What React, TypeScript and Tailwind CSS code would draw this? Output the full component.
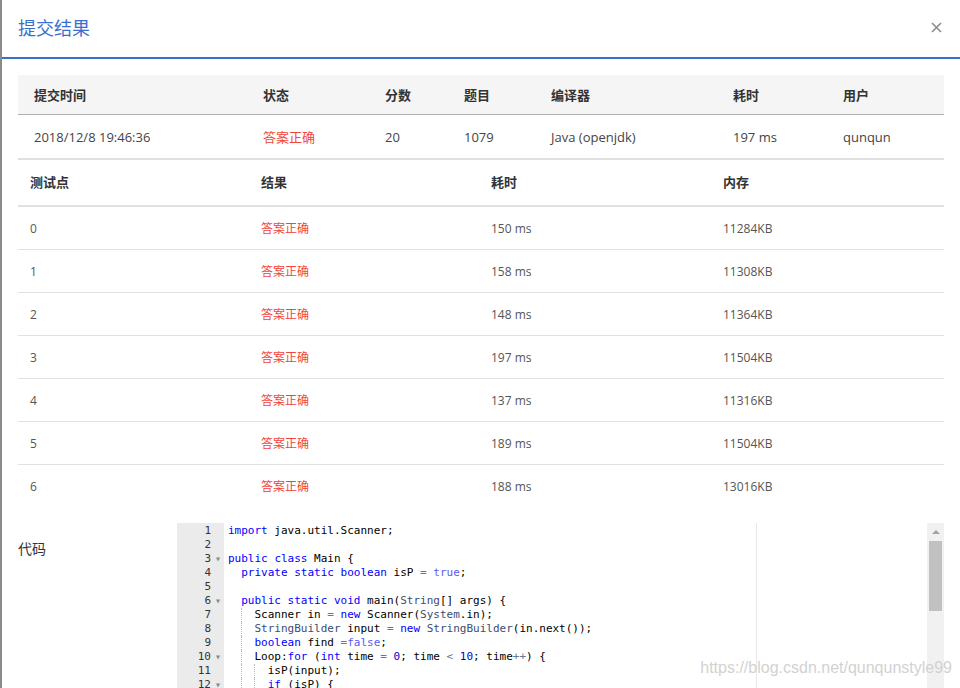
import React from "react";

type Tok = [string, string];

const tokColor: Record<string, string> = {
  k: "text-[#0000ff]",
  c: "text-[#585cf6]",
  n: "text-[#0000cd]",
  s: "text-[#3c4c72]",
  o: "text-[#687687]",
  t: "text-black",
};

const summaryCols = [
  { label: "提交时间", value: "2018/12/8 19:46:36" },
  { label: "状态", value: "答案正确", red: true },
  { label: "分数", value: "20" },
  { label: "题目", value: "1079" },
  { label: "编译器", value: "Java (openjdk)" },
  { label: "耗时", value: "197 ms" },
  { label: "用户", value: "qunqun" },
];

const cases = [
  ["0", "150 ms", "11284KB"],
  ["1", "158 ms", "11308KB"],
  ["2", "148 ms", "11364KB"],
  ["3", "197 ms", "11504KB"],
  ["4", "137 ms", "11316KB"],
  ["5", "189 ms", "11504KB"],
  ["6", "188 ms", "13016KB"],
];

// indent level, foldable, tokens
const code: { ind: number; fold?: boolean; toks: Tok[] }[] = [
  { ind: 0, toks: [["import", "k"], [" java.util.Scanner;", "t"]] },
  { ind: 0, toks: [] },
  { ind: 0, fold: true, toks: [["public", "k"], [" ", "t"], ["class", "k"], [" Main {", "t"]] },
  {
    ind: 1,
    toks: [
      ["private", "k"], [" ", "t"], ["static", "k"], [" ", "t"], ["boolean", "k"],
      [" isP ", "t"], ["=", "o"], [" ", "t"], ["true", "c"], [";", "t"],
    ],
  },
  { ind: 0, toks: [] },
  {
    ind: 1,
    fold: true,
    toks: [
      ["public", "k"], [" ", "t"], ["static", "k"], [" ", "t"], ["void", "k"],
      [" main(", "t"], ["String", "s"], ["[] args) {", "t"],
    ],
  },
  {
    ind: 2,
    toks: [
      ["Scanner in ", "t"], ["=", "o"], [" ", "t"], ["new", "k"], [" Scanner(", "t"],
      ["System", "s"], [".in);", "t"],
    ],
  },
  {
    ind: 2,
    toks: [
      ["StringBuilder", "s"], [" input ", "t"], ["=", "o"], [" ", "t"], ["new", "k"],
      [" ", "t"], ["StringBuilder", "s"], ["(in.next());", "t"],
    ],
  },
  { ind: 2, toks: [["boolean", "k"], [" find ", "t"], ["=", "o"], ["false", "c"], [";", "t"]] },
  {
    ind: 2,
    fold: true,
    toks: [
      ["Loop:", "t"], ["for", "k"], [" (", "t"], ["int", "k"], [" time ", "t"], ["=", "o"],
      [" ", "t"], ["0", "n"], ["; time ", "t"], ["<", "o"], [" ", "t"], ["10", "n"],
      ["; time", "t"], ["++", "o"], [") {", "t"],
    ],
  },
  { ind: 3, toks: [["isP(input);", "t"]] },
  { ind: 3, fold: true, toks: [["if", "k"], [" (isP) {", "t"]] },
];

function CodeEditor() {
  return (
    <div className="relative flex-1 h-[166px] overflow-hidden font-['DejaVu_Sans_Mono',monospace] text-[11px] leading-[14px]">
      <div className="flex">
        {/* gutter */}
        <div className="w-[47px] shrink-0 bg-[#ebebeb] pt-[1px] text-[#333]">
          {code.map((l, i) => (
            <div key={i} className="flex h-[14px]">
              <span className="w-[34px] text-right">{i + 1}</span>
              <span className="w-[13px] pl-[4px] text-[10px] text-[#888]">{l.fold ? "▾" : ""}</span>
            </div>
          ))}
        </div>
        {/* text */}
        <div className="pl-[4px] pt-[1px] whitespace-pre">
          {code.map((l, i) => (
            <div key={i} className="flex h-[14px]">
              {Array.from({ length: l.ind }).map((_, j) => (
                <span
                  key={j}
                  className={j > 0 ? "inline-block w-[2ch] border-l border-dotted border-[#bbb]" : "inline-block w-[2ch]"}
                />
              ))}
              <span>
                {l.toks.map(([txt, kind], j) => (
                  <span key={j} className={tokColor[kind]}>
                    {txt}
                  </span>
                ))}
              </span>
            </div>
          ))}
        </div>
      </div>

      {/* print margin */}
      <div className="absolute top-0 bottom-0 left-[579px] w-px bg-[#e8e8e8]" />

      {/* scrollbar */}
      <div className="absolute top-0 bottom-0 right-0 w-[17px] bg-[#f1f1f1]">
        <div className="mx-auto mt-[7px] h-0 w-0 border-x-[4px] border-b-[4px] border-x-transparent border-b-[#a3a3a3]" />
        <div className="mx-auto mt-[7px] h-[70px] w-[13px] bg-[#c1c1c1]" />
      </div>
    </div>
  );
}

export default function App() {
  return (
    <div className="flex h-[688px] w-[960px] overflow-hidden bg-white font-['Open_Sans','Noto_Sans_CJK_SC',sans-serif]">
      <div className="w-[2px] shrink-0 bg-[#8a8a8a]" />
      <div className="relative flex-1">
        {/* header */}
        <div className="flex h-[59px] items-start justify-between border-b-2 border-[#3a6fcf] px-[16px]">
          <h1 className="pt-[14px] text-[18px] leading-[26px] text-[#3a6fcf] font-['Noto_Sans_CJK_SC',sans-serif]">
            提交结果
          </h1>
          <svg className="mt-[22px] mr-[2px]" width="11" height="11" viewBox="0 0 11 11">
            <path d="M1 1L10 10M10 1L1 10" stroke="#8c8c8c" strokeWidth="1.6" />
          </svg>
        </div>

        <div className="px-[16px] pt-[16px]">
          {/* summary table */}
          <div className="grid grid-cols-[229px_122px_79px_87px_182px_110px_117px] text-[13px]">
            {summaryCols.map((c) => (
              <div
                key={c.label}
                className="h-[40px] border-b border-[#b0b0b0] bg-[#f5f5f5] pl-[16px] pt-[1px] leading-[39px] font-semibold text-[#333]"
              >
                {c.label}
              </div>
            ))}
            {summaryCols.map((c) => (
              <div
                key={c.label + "v"}
                className={`h-[45px] border-b-2 border-[#e0e0e0] pl-[16px] pt-[1px] leading-[43px] ${c.red ? "text-[#f0463c]" : "text-[#444]"}`}
              >
                {c.value}
              </div>
            ))}
          </div>

          {/* test points table */}
          <div className="grid grid-cols-[231px_230px_232px_233px]">
            {["测试点", "结果", "耗时", "内存"].map((h) => (
              <div
                key={h}
                className="h-[47px] border-b-2 border-[#dee2e6] pl-[12px] text-[13px] leading-[45px] font-semibold text-[#333]"
              >
                {h}
              </div>
            ))}
            {cases.map((r, i) => (
              <React.Fragment key={r[0]}>
                {[r[0], "答案正确", r[1], r[2]].map((v, j) => (
                  <div
                    key={j}
                    className={`h-[43px] pl-[12px] pt-[1px] text-[12px] leading-[41px] ${i < cases.length - 1 ? "border-b border-[#dee2e6]" : ""} ${j === 1 ? "text-[#f0463c]" : "text-[#555]"}`}
                  >
                    {v}
                  </div>
                ))}
              </React.Fragment>
            ))}
          </div>

          {/* code */}
          <div className="mt-[15px] flex">
            <div className="w-[159px] shrink-0 pt-[17px] text-[14px] leading-[18px] text-[#333]">代码</div>
            <CodeEditor />
          </div>
        </div>

        <div className="absolute right-[8px] bottom-[8px] font-['Liberation_Sans',sans-serif] text-[16px] text-[#d2d2d2]">
          https://blog.csdn.net/qunqunstyle99
        </div>
      </div>
    </div>
  );
}
